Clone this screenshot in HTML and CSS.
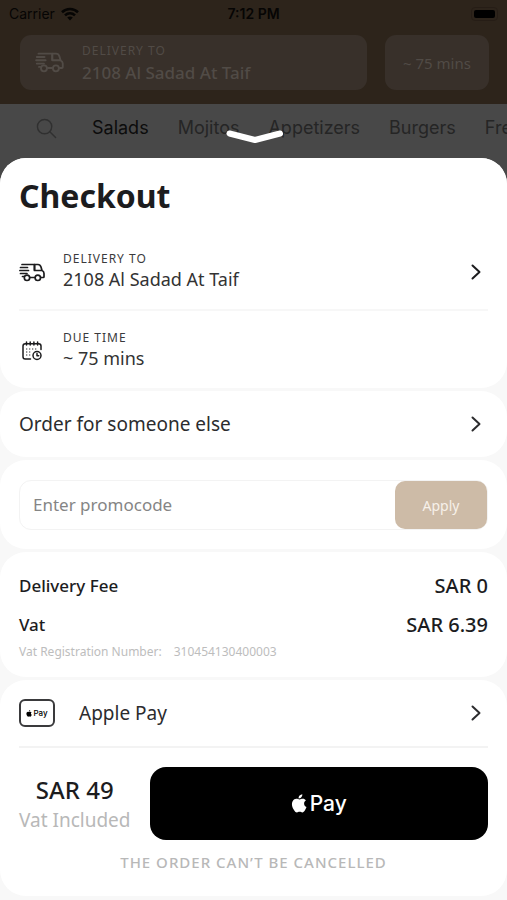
FILE: index.html
```html
<!DOCTYPE html>
<html lang="en">
<head>
<meta charset="utf-8">
<meta name="viewport" content="width=device-width, initial-scale=1">
<title>Checkout</title>
<link rel="stylesheet" href="styles.css">
</head>
<body>
<svg class="defs" aria-hidden="true">
  <symbol id="truck" viewBox="0 0 26 19">
    <g fill="none" stroke="currentColor" stroke-width="1.700" stroke-linecap="round" stroke-linejoin="round">
      <path d="M3 1.5h12.5v5.5M1.5 4.5h7M.9 7.5h8.6M1.5 10.500h6.500M3.500 13.500h1.500M11 14.500h4.500"/>
      <path d="M15.500 1.500h3.500c1.500 0 2.500 1 3 2.500l1 3.500h-7.500zM23 7.500c1.200.5 2 1.500 2 3v3.200c0 .5-.3.800-.8.800h-2.200"/>
      <circle cx="8" cy="14.800" r="2.700"/>
      <circle cx="18.800" cy="14.800" r="2.700"/>
    </g>
  </symbol>
  <symbol id="chevron" viewBox="0 0 10 16">
    <path d="M1.500 1.500L8.500 8l-7 6.500" fill="none" stroke="currentColor" stroke-width="2" stroke-linecap="round" stroke-linejoin="round"/>
  </symbol>
  <symbol id="apple" viewBox="0 0 16 19">
    <path fill="currentColor" d="M11.300.2c.1 1.200-.3 2.200-1 3-.7.800-1.700 1.300-2.700 1.200-.1-1.100.4-2.100 1-2.800C9.300.8 10.400.3 11.300.2zM14.900 6.500c-1.100.7-1.800 1.700-1.800 3.100 0 1.600.9 2.900 2.400 3.500-.4 1.200-1 2.400-1.700 3.400-.7 1-1.400 1.900-2.500 1.900-1 0-1.400-.6-2.700-.6s-1.700.6-2.700.6c-1.100 0-1.900-1-2.600-2C1.200 13.500.1 9.500 1.800 6.900c.8-1.300 2.200-2.100 3.500-2.100 1.300 0 2.200.7 3.300.7 1 0 1.700-.7 3.300-.7 1.200 0 2.300.6 3 1.700z"/>
  </symbol>
</svg>

<header class="top">
  <div class="status">
    <span class="carrier">Carrier
      <svg width="18" height="14" viewBox="0 0 18 14" aria-hidden="true"><g fill="none" stroke="currentColor" stroke-width="2.600"><path d="M1 5.200c4.500-4.300 11.500-4.300 16 0"/><path d="M4 8.400c2.900-2.700 7.100-2.700 10 0"/></g><path d="M9 13.500l-2.800-3c1.600-1.500 4-1.500 5.600 0z" fill="currentColor"/></svg>
    </span>
    <span class="clock">7:12 PM</span>
    <span class="battery"><i></i></span>
  </div>
  <div class="summary">
    <div class="chip address">
      <svg class="chip-icon" aria-hidden="true"><use href="#truck"/></svg>
      <div>
        <div class="chip-label">DELIVERY TO</div>
        <div class="chip-value">2108 Al Sadad At Taif</div>
      </div>
    </div>
    <div class="chip eta">~ 75 mins</div>
  </div>
</header>

<nav class="tabs">
  <svg class="search" viewBox="0 0 22 22" aria-hidden="true"><g fill="none" stroke="currentColor" stroke-width="1.500" stroke-linecap="round"><circle cx="9" cy="9" r="7.500"/><path d="M14.500 14.500l6 6"/></g></svg>
  <a class="active" href="#salads">Salads</a>
  <a href="#mojitos">Mojitos</a>
  <a href="#appetizers">Appetizers</a>
  <a href="#burgers">Burgers</a>
  <a href="#fresh">Fresh</a>
</nav>

<main class="sheet">
  <button class="grabber" aria-label="Close checkout"><svg viewBox="0 0 58 16" aria-hidden="true"><path d="M4.500 4.500L30 11l25-6.500" fill="none" stroke="#fff" stroke-width="6" stroke-linecap="round" stroke-linejoin="round"/></svg></button>

  <section class="card details">
    <h1>Checkout</h1>
    <button class="detail">
      <span class="detail-icon"><svg class="truck" aria-hidden="true"><use href="#truck"/></svg></span>
      <span class="detail-text">
        <span class="label">DELIVERY TO</span>
        <span class="value">2108 Al Sadad At Taif</span>
      </span>
      <svg class="chevron" aria-hidden="true"><use href="#chevron"/></svg>
    </button>
    <div class="detail">
      <span class="detail-icon"><svg class="calendar" viewBox="0 0 20 20" aria-hidden="true">
        <g fill="none" stroke="currentColor" stroke-width="1.500" stroke-linecap="round" stroke-linejoin="round">
          <path d="M8.500 18H3.300C1.900 18 1 17.100 1 15.700V5c0-1.400.9-2.300 2.300-2.300h13.400C18.100 2.700 19 3.600 19 5v3.500"/>
          <path d="M4.500 1v3M8.200 1v3M11.900 1v3M15.600 1v3"/>
          <circle cx="15" cy="14.500" r="4"/>
          <path d="M15 12.500v2.200h1.700"/>
        </g>
        <path d="M4 8h12M4 11h6M4 14h6" fill="none" stroke="currentColor" stroke-width="1.300" stroke-dasharray="1.300 1.700" opacity=".6"/>
      </svg></span>
      <span class="detail-text">
        <span class="label">DUE TIME</span>
        <span class="value">~ 75 mins</span>
      </span>
    </div>
  </section>

  <section class="card">
    <button class="link-row">
      <span>Order for someone else</span>
      <svg class="chevron" aria-hidden="true"><use href="#chevron"/></svg>
    </button>
  </section>

  <section class="card promo-card">
    <form class="promo">
      <input type="text" placeholder="Enter promocode" aria-label="Promocode">
      <button type="button">Apply</button>
    </form>
  </section>

  <section class="card fees">
    <div class="fee"><span>Delivery Fee</span><span class="amount">SAR 0</span></div>
    <div class="fee"><span>Vat</span><span class="amount">SAR 6.39</span></div>
    <div class="registration"><span>Vat Registration Number:</span><span>310454130400003</span></div>
  </section>

  <section class="card payment">
    <button class="link-row method">
      <span class="badge"><svg aria-hidden="true"><use href="#apple"/></svg>Pay</span>
      <span>Apple Pay</span>
      <svg class="chevron" aria-hidden="true"><use href="#chevron"/></svg>
    </button>
    <div class="pay">
      <div class="total">
        <div class="total-sum">SAR 49</div>
        <div class="total-note">Vat Included</div>
      </div>
      <button class="pay-button" aria-label="Apple Pay"><svg aria-hidden="true"><use href="#apple"/></svg><span>Pay</span></button>
    </div>
    <p class="notice">THE ORDER CAN’T BE CANCELLED</p>
  </section>
</main>
</body>
</html>
```
FILE: styles.css
```css
* { box-sizing: border-box; }

body {
  margin: 0;
  min-height: 100vh;
  display: flex;
  flex-direction: column;
  background: #484848;
  color: #1c1c1e;
  font-family: "Noto Sans", sans-serif;
  overflow-x: hidden;
}

button {
  border: 0;
  padding: 0;
  background: none;
  color: inherit;
  font: inherit;
  text-align: left;
  cursor: pointer;
}

h1, p { margin: 0; }

.defs { position: absolute; width: 0; height: 0; }

/* Dimmed page behind the sheet */
.top {
  background: #2d241b;
  padding-bottom: 14px;
}

.status {
  display: grid;
  grid-template-columns: 1fr auto 1fr;
  align-items: center;
  height: 28px;
  padding: 0 9px;
  color: #060504;
  font: 14px/20px Inter, sans-serif;
}

.carrier { display: flex; align-items: center; gap: 6px; }
.clock { font-weight: 600; }

.battery {
  justify-self: end;
  width: 27px;
  padding: 2px;
  border: 1px solid #261d16;
  border-radius: 4px;
}

.battery i {
  display: block;
  height: 8px;
  border-radius: 2px;
  background: #000;
}

.summary {
  display: flex;
  gap: 18px;
  padding: 7px 18px 0 20px;
}

.chip {
  display: flex;
  align-items: center;
  height: 55px;
  border-radius: 11px;
  background: #38302a;
  color: #514b46;
}

.address { flex: 1; gap: 18px; padding-left: 15px; }
.chip-icon { width: 29px; height: 21px; }
.chip-label { font-size: 12px; line-height: 20px; letter-spacing: 1px; }
.chip-value { font-size: 17px; line-height: 24px; font-weight: 500; }
.eta { justify-content: center; width: 104px; font-size: 15px; }

.tabs {
  display: flex;
  align-items: center;
  gap: 29px;
  height: 48px;
  padding-left: 36px;
  overflow: hidden;
  font: 18px/24px Inter, sans-serif;
}

.tabs a { flex: none; color: #252525; text-decoration: none; }
.tabs a.active { color: #0c0c0c; }
.search { flex: none; width: 21px; height: 21px; margin-right: 6px; color: #303030; }

/* Checkout sheet */
.sheet {
  position: relative;
  flex: 1;
  display: flex;
  flex-direction: column;
  gap: 3px;
  margin-top: 6px;
  padding-bottom: 4px;
  border-radius: 26px 26px 0 0;
  background: #f8f8f8;
}

.grabber {
  position: absolute;
  top: -29px;
  left: 50%;
  width: 58px;
  height: 16px;
  transform: translateX(-50%);
}

.grabber svg { display: block; width: 58px; height: 16px; }

.card {
  padding: 0 19px;
  border-radius: 26px;
  background: #fff;
}

.details { padding-top: 16px; }

h1 {
  margin-bottom: 14px;
  font-size: 32px;
  line-height: 44px;
  font-weight: 700;
}

.detail {
  display: flex;
  align-items: center;
  width: 100%;
  padding: 17px 0 20px;
}

button.detail { border-bottom: 2px solid #f7f7f7; }
.detail-icon { flex: none; width: 44px; line-height: 0; padding-top: 6px; }
.detail-text { flex: 1; }
.label, .value { display: block; line-height: 20px; }
.label { font-size: 12px; letter-spacing: 1px; color: #3a3a3c; }
.value { font-size: 18px; color: #333; }
.truck { width: 26px; height: 19px; }
.calendar { width: 20px; height: 20px; margin-left: 3px; }
.chevron { flex: none; width: 10px; height: 16px; margin-right: 7px; }
.detail .chevron { margin-top: 6px; }

.link-row {
  display: flex;
  align-items: center;
  justify-content: space-between;
  width: 100%;
  height: 66px;
  font-size: 19px;
  color: #2c2c2e;
}

.promo-card { padding-top: 20px; padding-bottom: 19px; }

.promo {
  display: flex;
  height: 50px;
  border: 1px solid #f3f3f3;
  border-radius: 12px;
}

.promo input {
  flex: 1;
  min-width: 0;
  border: 0;
  padding: 0 13px;
  background: none;
  outline: 0;
  font: 17px/24px "Noto Sans", sans-serif;
}

.promo input::placeholder { color: #858585; opacity: 1; }

.promo button {
  width: 92px;
  border-radius: 10px;
  background: #cdbba7;
  color: #f7f1ea;
  font-size: 14px;
  text-align: center;
}

.fees { padding-top: 14px; padding-bottom: 17px; }

.fee {
  display: flex;
  align-items: center;
  justify-content: space-between;
  height: 39px;
  font-size: 17px;
  font-weight: 500;
}

.amount { font-size: 20px; }

.registration {
  display: flex;
  gap: 12px;
  font-size: 12px;
  line-height: 16px;
  color: #bdbdbd;
}

.method { justify-content: flex-start; border-bottom: 2px solid #f3f3f3; height: 68px; }
.method .chevron { margin-left: auto; }

.badge {
  display: flex;
  align-items: center;
  justify-content: center;
  gap: 1px;
  width: 36px;
  height: 28px;
  margin-right: 24px;
  border: 2px solid #3a3a3c;
  border-radius: 6px;
  color: #000;
  font: 500 8px/10px Inter, sans-serif;
}

.badge svg { width: 6px; height: 7px; }

.pay {
  display: flex;
  align-items: center;
  gap: 19px;
  padding-top: 19px;
}

.total { flex: none; text-align: center; }
.total-sum { font-size: 24px; line-height: 32px; font-weight: 500; }
.total-note { font-size: 19px; line-height: 28px; color: #b8b8b8; }

.pay-button {
  flex: 1;
  display: flex;
  align-items: center;
  justify-content: center;
  gap: 3px;
  height: 73px;
  border-radius: 16px;
  background: #000;
  color: #fff;
  font: 500 21px/24px Inter, sans-serif;
}

.pay-button svg { width: 16px; height: 19px; }

.notice {
  padding: 12px 0 24px;
  text-align: center;
  font-size: 15px;
  line-height: 20px;
  font-weight: 500;
  letter-spacing: 1px;
  color: #b8b8b8;
}
```
